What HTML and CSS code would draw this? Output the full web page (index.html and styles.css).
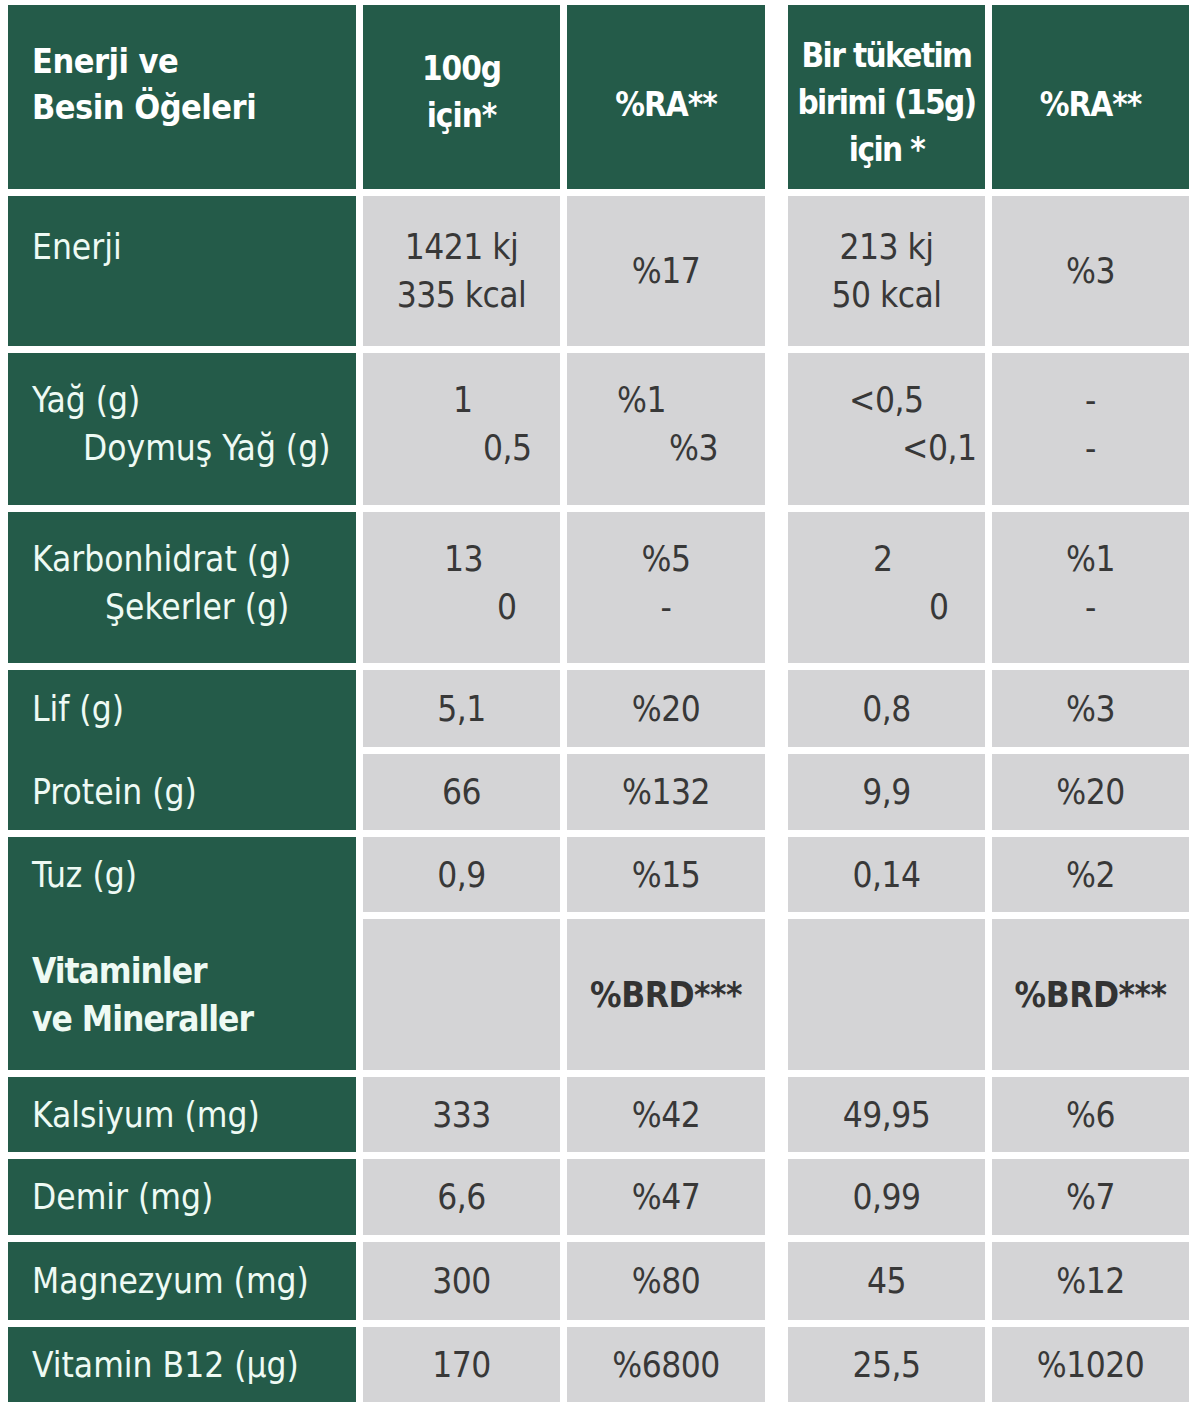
FILE: index.html
```html
<!DOCTYPE html>
<html lang="tr">
<head>
<meta charset="utf-8">
<title>Besin Değerleri</title>
<link rel="stylesheet" href="styles.css">
</head>
<body>
<div class="table">
  <!-- header -->
  <div class="cell head label-head"><div class="ln">Enerji ve</div><div class="ln">Besin Öğeleri</div></div>
  <div class="cell head h-100"><div class="ln">100g</div><div class="ln">için*</div></div>
  <div class="cell head h-ra"><div class="ln">%RA**</div></div>
  <div class="cell head h-portion c4"><div class="ln">Bir tüketim</div><div class="ln">birimi (15g)</div><div class="ln">için *</div></div>
  <div class="cell head h-ra"><div class="ln">%RA**</div></div>

  <!-- Enerji -->
  <div class="cell name"><div class="ln">Enerji</div><div class="ln">&nbsp;</div></div>
  <div class="cell val"><div class="ln">1421 kj</div><div class="ln">335 kcal</div></div>
  <div class="cell val"><div class="ln">%17</div></div>
  <div class="cell val c4"><div class="ln">213 kj</div><div class="ln">50 kcal</div></div>
  <div class="cell val"><div class="ln">%3</div></div>

  <!-- Yağ -->
  <div class="cell name lift"><div class="ln">Yağ (g)</div><div class="ln sub-1">Doymuş Yağ (g)</div></div>
  <div class="cell val lift free"><div class="ln at-90">1</div><div class="ln at-120">0,5</div></div>
  <div class="cell val lift free"><div class="ln at-50">%1</div><div class="ln at-102">%3</div></div>
  <div class="cell val lift free c4"><div class="ln at-61">&lt;0,5</div><div class="ln at-114">&lt;0,1</div></div>
  <div class="cell val lift"><div class="ln">-</div><div class="ln">-</div></div>

  <!-- Karbonhidrat -->
  <div class="cell name lift"><div class="ln">Karbonhidrat (g)</div><div class="ln sub-2">Şekerler (g)</div></div>
  <div class="cell val lift free"><div class="ln at-81">13</div><div class="ln at-134">0</div></div>
  <div class="cell val lift"><div class="ln">%5</div><div class="ln">-</div></div>
  <div class="cell val lift free c4"><div class="ln at-85">2</div><div class="ln at-141">0</div></div>
  <div class="cell val lift"><div class="ln">%1</div><div class="ln">-</div></div>

  <!-- Lif + Protein -->
  <div class="cell name span2 pair-a"><div class="ln">Lif (g)</div><div class="ln">Protein (g)</div></div>
  <div class="cell val"><div class="ln">5,1</div></div>
  <div class="cell val"><div class="ln">%20</div></div>
  <div class="cell val c4"><div class="ln">0,8</div></div>
  <div class="cell val"><div class="ln">%3</div></div>
  <div class="cell val"><div class="ln">66</div></div>
  <div class="cell val"><div class="ln">%132</div></div>
  <div class="cell val c4"><div class="ln">9,9</div></div>
  <div class="cell val"><div class="ln">%20</div></div>

  <!-- Tuz + Vitaminler -->
  <div class="cell name span2 pair-b"><div class="ln">Tuz (g)</div><div class="ln strong"><span>Vitaminler</span><span>ve Mineraller</span></div></div>
  <div class="cell val"><div class="ln">0,9</div></div>
  <div class="cell val"><div class="ln">%15</div></div>
  <div class="cell val c4"><div class="ln">0,14</div></div>
  <div class="cell val"><div class="ln">%2</div></div>
  <div class="cell val"></div>
  <div class="cell val strong"><div class="ln">%BRD***</div></div>
  <div class="cell val c4"></div>
  <div class="cell val strong"><div class="ln">%BRD***</div></div>

  <!-- Minerals -->
  <div class="cell name"><div class="ln">Kalsiyum (mg)</div></div>
  <div class="cell val"><div class="ln">333</div></div>
  <div class="cell val"><div class="ln">%42</div></div>
  <div class="cell val c4"><div class="ln">49,95</div></div>
  <div class="cell val"><div class="ln">%6</div></div>

  <div class="cell name"><div class="ln">Demir (mg)</div></div>
  <div class="cell val"><div class="ln">6,6</div></div>
  <div class="cell val"><div class="ln">%47</div></div>
  <div class="cell val c4"><div class="ln">0,99</div></div>
  <div class="cell val"><div class="ln">%7</div></div>

  <div class="cell name"><div class="ln">Magnezyum (mg)</div></div>
  <div class="cell val"><div class="ln">300</div></div>
  <div class="cell val"><div class="ln">%80</div></div>
  <div class="cell val c4"><div class="ln">45</div></div>
  <div class="cell val"><div class="ln">%12</div></div>

  <div class="cell name"><div class="ln">Vitamin B12 (µg)</div></div>
  <div class="cell val"><div class="ln">170</div></div>
  <div class="cell val"><div class="ln">%6800</div></div>
  <div class="cell val c4"><div class="ln">25,5</div></div>
  <div class="cell val"><div class="ln">%1020</div></div>
</div>
</body>
</html>
```
FILE: styles.css
```css
html, body {
  background: #ffffff;
}
body {
  margin: 5px 0 0 8px;
  font-family: "DejaVu Sans Condensed", "Liberation Sans Narrow", "DejaVu Sans", sans-serif;
  font-stretch: condensed;
}
.table {
  display: grid;
  grid-template-columns: 348px 197px 198px 213px 197px;
  grid-template-rows: 184px 150px 152px 151px 77px 76px 75px 151px 75px 76px 78px 75px;
  column-gap: 7px;
  row-gap: 7px;
  width: 1181px;
}
.cell {
  display: flex;
  flex-direction: column;
  justify-content: center;
  box-sizing: border-box;
}
.c4 {
  margin-left: 16px;
}
.ln {
  white-space: nowrap;
}

/* header */
.head {
  background: #245b49;
  color: #ffffff;
  font-weight: bold;
  font-size: 33px;
  letter-spacing: -1px;
  line-height: 47px;
  align-items: center;
  text-align: center;
}
.label-head {
  align-items: flex-start;
  text-align: left;
  padding: 0 0 26px 24px;
  line-height: 46px;
  font-size: 34px;
  letter-spacing: -0.5px;
}
.h-100 { padding-bottom: 10px; }
.h-ra { padding-top: 14px; }
.h-portion {
  padding-top: 10px;
  letter-spacing: -1.6px;
}

/* row labels */
.name {
  background: #245b49;
  color: #eefaf4;
  font-size: 35px;
  line-height: 48px;
  padding-left: 24px;
}
.sub-1 { padding-left: 51px; }
.sub-2 { padding-left: 73px; }
.span2 {
  grid-row: span 2;
  display: grid;
  row-gap: 7px;
  justify-content: stretch;
}
.span2 .ln {
  display: flex;
  flex-direction: column;
  justify-content: center;
}
.pair-a { grid-template-rows: 77px 76px; }
.pair-b { grid-template-rows: 75px 151px; }
.name .strong {
  font-weight: bold;
  letter-spacing: -1px;
}

/* values */
.val {
  background: #d4d4d6;
  color: #383838;
  font-size: 35px;
  line-height: 48px;
  letter-spacing: -0.5px;
  align-items: center;
  text-align: center;
}
.val.strong {
  font-weight: bold;
  letter-spacing: -0.5px;
  color: #333333;
}
.lift { padding-bottom: 10px; }
.free { align-items: stretch; text-align: left; }
.at-50 { padding-left: 50px; }
.at-61 { padding-left: 61px; }
.at-81 { padding-left: 81px; }
.at-85 { padding-left: 85px; }
.at-90 { padding-left: 90px; }
.at-102 { padding-left: 102px; }
.at-114 { padding-left: 114px; }
.at-120 { padding-left: 120px; }
.at-134 { padding-left: 134px; }
.at-141 { padding-left: 141px; }
```
